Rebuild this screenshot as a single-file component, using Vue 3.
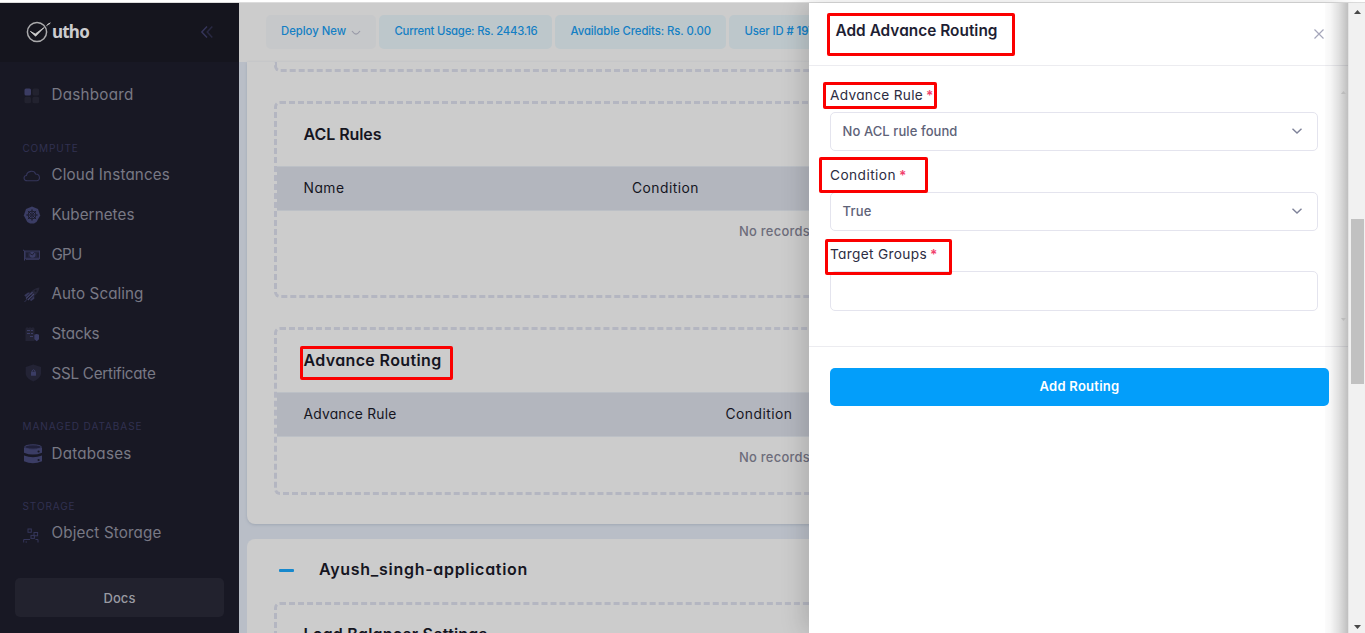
<script setup>
// Spreads letters so that a label occupies the given width in pixels.
const vFit = {
  mounted(el, { value }) {
    if (!value) return
    const natural = el.getBoundingClientRect().width
    const count = el.textContent.trim().length
    el.style.letterSpacing = `${(value - natural) / count}px`
  },
}

const sections = [
  { title: '', items: [{ label: 'Dashboard', icon: 'grid', w: 82 }] },
  {
    title: 'COMPUTE',
    w: 56,
    items: [
      { label: 'Cloud Instances', icon: 'cloud', w: 118.5 },
      { label: 'Kubernetes', icon: 'kube', w: 83 },
      { label: 'GPU', icon: 'gpu', w: 30 },
      { label: 'Auto Scaling', icon: 'rocket', w: 92 },
      { label: 'Stacks', icon: 'stack', w: 48 },
      { label: 'SSL Certificate', icon: 'shield', w: 104 },
    ],
  },
  { title: 'MANAGED DATABASE', w: 120, items: [{ label: 'Databases', icon: 'db', w: 80 }] },
  { title: 'STORAGE', w: 53, items: [{ label: 'Object Storage', icon: 'object', w: 110 }] },
]

const spokes = [0, 45, 90, 135, 180, 225, 270, 315]

const tables = [
  { title: 'ACL Rules', tw: 78, first: 'Name', fw: 41, cls: 'acl' },
  { title: 'Advance Routing', tw: 138, first: 'Advance Rule', fw: 93, cls: 'adv' },
]
</script>

<template>
  <div class="page">
    <div class="strip"></div>
    <div class="body">
      <aside class="sidebar">
        <div class="brand">
          <svg class="logo" width="28" height="24" viewBox="0 0 28 24">
            <circle cx="11" cy="12" r="9.6" fill="none" stroke="#aaaaac" stroke-width="1.5" />
            <path d="M4.4 11.4 L9.3 14 L18 7.6 L9.6 16.2 Z" fill="#d0d0d0" stroke="#d0d0d0" stroke-width="0.8" />
            <path d="M19.8 5.4 Q21.5 2 26.3 1.4 Q24.5 5 21.2 6.4" fill="#c8c8c8" stroke="#15151e" stroke-width="1.2" />
          </svg>
          <span class="brand-name"><span v-fit="37">utho</span></span>
          <svg class="collapse" width="14" height="14" viewBox="0 0 14 14" fill="none" stroke-width="1.5">
            <path d="M7 1.5 L1.8 7 L7 12.5" stroke="#353559" />
            <path d="M12.3 1.5 L7.2 7 L12.3 12.5" stroke="#282842" />
          </svg>
        </div>
        <nav>
          <template v-for="s in sections" :key="s.title">
            <div v-if="s.title" class="section"><span v-fit="s.w">{{ s.title }}</span></div>
            <div v-for="i in s.items" :key="i.label" class="item">
              <span class="icon" :class="i.icon">
                <svg v-if="i.icon === 'grid'" width="18" height="18" viewBox="0 0 18 18" fill="#22222f">
                  <rect x="1.5" y="1.5" width="6.5" height="7" rx="1.5" fill="#3b3c63" />
                  <rect x="9.5" y="1.5" width="6.6" height="7" rx="1.5" />
                  <rect x="1.5" y="9.8" width="6.5" height="6.5" rx="1.5" />
                  <rect x="9.5" y="9.8" width="6.6" height="6.5" rx="1.5" />
                </svg>
                <svg v-else-if="i.icon === 'cloud'" width="18" height="14" viewBox="0 0 18 14">
                  <path d="M4.3 11.8 C0 11.8 .2 6.7 3.5 6.5 C4.1 1.4 11.4 1 12.6 5 C17.6 5.1 17.5 11.8 13.7 11.8 Z" fill="none" stroke="#34355a" stroke-width="1.1" />
                </svg>
                <svg v-else-if="i.icon === 'kube'" width="18" height="18" viewBox="0 0 18 18">
                  <path d="M9 .5 L15 3.1 L17.2 9.5 L13.5 16 L11 17.4 H7 L4.3 16 L.8 9.5 L3 3.1 Z" fill="#3b3d65" />
                  <g fill="none" stroke="#181824" stroke-width=".8">
                    <circle cx="9" cy="9" r="4" />
                    <circle cx="9" cy="9" r="1" />
                    <path v-for="a in spokes" :key="a" d="M9 7.8 V3.2" :transform="`rotate(${a} 9 9)`" />
                  </g>
                </svg>
                <svg v-else-if="i.icon === 'gpu'" width="18" height="12" viewBox="0 0 18 12">
                  <path d="M0 1 L1.5 1.8 V11.5" fill="none" stroke="#3b3d65" />
                  <rect x="2" y="2" width="14.5" height="7.7" fill="#25263e" stroke="#37385d" />
                  <circle cx="9.5" cy="5.7" r="3" fill="#3b3d65" />
                  <path d="M9.5 6 L11.5 3.4 M9.5 6 L7 4.6 M4 4 V8 M15 4 V8" stroke="#181824" stroke-width=".8" />
                  <path d="M3 10.5 H16" stroke="#333456" />
                </svg>
                <svg v-else-if="i.icon === 'rocket'" width="18" height="17" viewBox="0 0 18 17">
                  <path d="M16.5 1.5 Q10.8 2.2 6.5 7.2 L10 11 Q16 7 16.5 1.5 Z" fill="#262638" />
                  <path d="M1.2 9.2 L5 6.5 L7.3 6.8 L3 11 Z M8.2 15 L11.3 12.7 L11.2 9.8 L6.8 14 Z" fill="#363759" />
                  <path d="M3 12.5 L9.6 6.2 M4.8 14 L11 8" stroke="#44456d" stroke-width="1.1" />
                  <path d="M1.5 16 L4.5 12.8" stroke="#303150" />
                  <circle cx="12.6" cy="4.8" r="1" fill="#181824" />
                </svg>
                <svg v-else-if="i.icon === 'stack'" width="16" height="16" viewBox="0 0 16 16">
                  <path d="M1.5 2.5 L3 1 L4.5 2 L6 1 L7.5 2 L9 1 L10.5 2.5 V15 H1.5 Z" fill="#232334" />
                  <path d="M3 4.5 H6 M7 4.5 H9 M3 7.5 H6 M7 7.5 H9 M6 10.5 H9" stroke="#3b3d65" />
                  <path d="M10.3 8.8 Q12.7 7 15 8.8 V13.3 L12.7 15.3 L10.3 13.3 Z" fill="#3b3d65" />
                </svg>
                <svg v-else-if="i.icon === 'shield'" width="17" height="18" viewBox="0 0 17 18">
                  <path d="M8.3 .5 L16 3 V10 Q15 15 8.3 17.5 Q1.5 15 .7 10 V3 Z" fill="#232335" />
                  <rect x="6" y="7.8" width="5" height="4" rx=".6" fill="#3b3d65" />
                  <path d="M7 8 V6.8 Q8.5 4.6 10 6.8 V8" fill="none" stroke="#3b3d65" />
                </svg>
                <svg v-else-if="i.icon === 'db'" width="18" height="20" viewBox="0 0 18 20">
                  <path d="M0 3.5 V8.7 Q8.8 12.5 18 8.7 V3.5 Q9 7.2 0 3.5 Z M0 11.6 V17.3 Q8.8 21.4 18 17.3 V11.6 Q9 14.7 0 11.6 Z" fill="#3b3d65" />
                  <ellipse cx="9" cy="3" rx="8.4" ry="2.2" fill="#20203a" stroke="#3b3d65" />
                  <circle cx="14.6" cy="7.5" r="1.1" fill="#181824" />
                  <circle cx="14.6" cy="16" r="1.1" fill="#181824" />
                </svg>
                <svg v-else width="16" height="16" viewBox="0 0 16 16" fill="none" stroke="#35365a">
                  <rect x="5" y="2" width="3.3" height="3.3" />
                  <rect x="11" y="5.5" width="3.6" height="3.3" />
                  <rect x="8" y="8.4" width="3.4" height="3" />
                  <path d="M.7 15.5 V12.5 H7 M12.5 12.5 H15 V15.5 M2.5 15 H4" />
                </svg>
              </span>
              <span v-fit="i.w">{{ i.label }}</span>
            </div>
          </template>
        </nav>
        <div class="docs"><span v-fit="32">Docs</span></div>
      </aside>

      <main class="main">
        <header class="topbar">
          <div class="pill deploy">
            <span v-fit="65">Deploy New</span>
            <svg width="10" height="6" viewBox="0 0 10 6" fill="none" stroke="#999ba8" stroke-width="1.2"><path d="M1 1 Q3 3.8 5 4.1 Q7 3.8 9 1" /></svg>
          </div>
          <div class="pill usage"><span v-fit="143">Current Usage: Rs. 2443.16</span></div>
          <div class="pill credits"><span v-fit="140.5">Available Credits: Rs. 0.00</span></div>
          <div class="pill user"><span v-fit="84">User ID <b># 19782</b></span></div>
        </header>
        <div class="content">
          <section class="card top">
            <div class="dashed tail"></div>
            <div v-for="t in tables" :key="t.title" class="dashed" :class="t.cls">
              <h3><span v-fit="t.tw">{{ t.title }}</span></h3>
              <div class="thead">
                <span class="first"><span v-fit="t.fw">{{ t.first }}</span></span>
                <span v-fit="67">Condition</span>
              </div>
              <div class="empty"><span v-fit="112">No records found</span></div>
            </div>
          </section>
          <section class="card">
            <div class="app-head">
              <i class="minus"></i>
              <span v-fit="209">Ayush_singh-application</span>
            </div>
            <div class="dashed lb"><h3><span v-fit="184">Load Balancer Settings</span></h3></div>
          </section>
        </div>
      </main>

      <div class="drawer">
        <header class="drawer-head">
          <h2><span v-fit="162">Add Advance Routing</span></h2>
          <svg width="10" height="10" viewBox="0 0 10 10" stroke="#a5a6ba" stroke-width="1.2"><path d="M.5 .5 L9.5 9.5 M9.5 .5 L.5 9.5" /></svg>
        </header>
        <div class="form">
          <label><span v-fit="93">Advance Rule</span><em>*</em></label>
          <div class="select"><span v-fit="115">No ACL rule found</span>
            <svg width="10" height="6" viewBox="0 0 10 6" fill="none" stroke="#7e8299" stroke-width="1.4"><path d="M.5 .7 L5 5 L9.5 .7" /></svg>
          </div>
          <label><span v-fit="66">Condition</span><em>*</em></label>
          <div class="select"><span v-fit="29">True</span>
            <svg width="10" height="6" viewBox="0 0 10 6" fill="none" stroke="#7e8299" stroke-width="1.4"><path d="M.5 .7 L5 5 L9.5 .7" /></svg>
          </div>
          <label><span v-fit="97">Target Groups</span><em>*</em></label>
          <div class="select last"></div>
        </div>
        <footer><button><span v-fit="80">Add Routing</span></button></footer>
        <div class="edge"><i class="tri up"></i><i class="tri down"></i></div>
      </div>

      <div class="scrollbar">
        <i class="tri up"></i>
        <div class="thumb"></div>
        <i class="tri down"></i>
      </div>
    </div>

    <div class="mark m1"></div>
    <div class="mark m2"></div>
    <div class="mark m3"></div>
    <div class="mark m4"></div>
    <div class="mark m5"></div>
  </div>
</template>

<style>
html, body { margin: 0; overflow: hidden; }
</style>

<style scoped>
* { box-sizing: border-box; }
.page {
  position: relative; width: 1365px; height: 633px; overflow: hidden; background: #fff;
  font-family: Inter, "Open Sans", sans-serif; font-feature-settings: "cv11"; font-size: 13px; white-space: nowrap;
}
.strip { height: 3px; border-bottom: 1px solid #dcdcdc; }
.body { display: flex; height: 630px; }
svg { display: block; flex: none; }

.sidebar { width: 239px; flex: none; background: #181824; display: flex; flex-direction: column; }
.brand { height: 59px; flex: none; background: #15151e; display: flex; align-items: center; padding: 0 0 1px 26px; }
.logo { width: 28px; }
.brand-name { margin-left: -2px; width: 148px; font: 700 17px/20px "Noto Sans", sans-serif; color: #ccccce; }
nav { padding-top: 13px; flex: 1; }
.section { height: 40.3px; padding: 26px 0 0 22.5px; font-size: 10px; line-height: 15px; color: #313151; }
.item { height: 39.67px; display: flex; align-items: center; padding-left: 23px; font-size: 15.2px; color: #787985; }
.icon { width: 28.5px; padding-top: 2px; }
.shield { padding-left: 2px; padding-top: 0; }
.stack { padding-left: 1px; }
.db { padding-left: 1px; }
.object { padding-top: 4px; }
.docs {
  height: 39px; margin: 0 15px 16px; border-radius: 5px; background: #22222e; color: #999aa2;
  display: flex; align-items: center; justify-content: center; font-weight: 500; font-size: 13px;
}

.main { width: 570px; flex: none; overflow: hidden; background: #b9bec7; }
.topbar { height: 59px; background: #ccc; padding: 12px 0 0 27px; display: flex; gap: 3px; }
.pill { height: 34px; flex: none; border-radius: 5px; background: #bdc7cb; color: #147fc4; font-size: 11.3px; font-weight: 500; display: flex; align-items: center; padding: 0 15px 2px 15.5px; }
.deploy { width: 110px; padding-left: 15px; background: #c6c8ca; gap: 5px; }
.deploy svg { margin-top: 4px; }
.usage { width: 173px; }
.credits { width: 171px; }
.user { width: 140px; }
.user b { font-weight: 600; }
.content { padding-left: 8px; }
.card { width: 1090px; background: #ccc; border-radius: 8px; padding-left: 27px; height: 110px; }
.card.top { height: 462px; margin-bottom: 15px; border-radius: 0 0 8px 8px; box-shadow: 0 1px 3px #9fa7b3; }
.dashed { width: 1036px; border: 3px dashed #b4b6c1; border-radius: 6px; }
.tail { height: 10px; border-top: 0; border-radius: 0 0 6px 6px; margin-bottom: 29px; }
.acl { height: 197px; margin-bottom: 29px; }
.adv { height: 168px; }
h3 { margin: 0; height: 62px; padding: 0 0 2px 26.5px; display: flex; align-items: center; font-size: 16px; font-weight: 600; color: #15151f; }
.thead { height: 45px; background: #b3b6be; border-top: 1px solid #bcc0c6; border-bottom: 1px solid #bcc0c6; display: flex; align-items: center; padding: 0 0 2px 26.5px; color: #15151f; font-size: 13.8px; }
.acl .first { width: 328.5px; }
.adv .first { width: 422px; }
.empty { padding: 12px 0 0 462px; line-height: 18px; color: #6d6d7b; font-weight: 500; font-size: 12.9px; }
.app-head { height: 62px; display: flex; align-items: center; gap: 25px; padding: 0 0 3px 5px; font-size: 16px; font-weight: 600; color: #15151f; }
.minus { width: 15px; height: 3px; border-radius: 1px; background: #1688cd; margin-top: 3px; }
.lb { height: 100px; margin-top: 1px; }
.lb h3 { padding-bottom: 5px; }

.drawer { position: relative; width: 539px; flex: none; background: #fff; box-shadow: -6px 0 22px rgba(0, 0, 0, .15); }
.drawer-head { height: 63px; border-bottom: 1px solid #ececf0; display: flex; justify-content: space-between; padding: 16px 24px 0 26.5px; }
.drawer-head svg { margin-top: 10px; }
h2 { margin: 0; font-size: 15.4px; line-height: 23px; font-weight: 600; color: #1e1e33; }
.form { height: 281px; padding: 19px 30px 0 21px; border-bottom: 1px solid #ececf0; }
label { display: flex; height: 20px; gap: 3px; margin-bottom: 7px; line-height: 21px; font-size: 13.7px; color: #2c2c42; align-items: flex-start; }
label em { font-style: normal; color: #f1416c; font-weight: 600; }
.select { height: 39px; margin: 0 0 14px; border: 1px solid #e4e4ee; border-radius: 5px; display: flex; align-items: center; justify-content: space-between; padding: 0 15px 1px 11.5px; font-size: 13px; font-weight: 500; color: #5e6278; }
.form .select:nth-of-type(2) { margin-bottom: 13px; }
.select.last { height: 40px; margin-bottom: 0; }
footer { position: relative; z-index: 1; padding: 21px 19px 0 21px; }
button { display: block; width: 499px; height: 38px; border: 0; border-radius: 5px; background: #039efa; color: #fff; font: 600 13px Inter, sans-serif; font-feature-settings: inherit; padding: 0 0 2px; }
.edge { position: absolute; z-index: 0; top: 0; right: 0; width: 23px; height: 630px; background: linear-gradient(90deg, rgba(0, 0, 0, .015), rgba(0, 0, 0, .03) 22%, rgba(0, 0, 0, .12) 60%, rgba(0, 0, 0, .25)); }
.tri { display: block; width: 7px; height: 4px; background: #484848; }
.tri.up { clip-path: polygon(50% 0, 100% 100%, 0 100%); }
.tri.down { clip-path: polygon(0 0, 100% 0, 50% 100%); }
.edge .tri { width: 5px; height: 3px; background: #bbb; margin-left: 16px; }
.edge .up { margin-top: 88px; }
.edge .down { margin-top: 224px; }

.scrollbar { position: relative; width: 17px; flex: none; background: #f1f1f1; border-left: 1px solid #e4e4e4; display: flex; flex-direction: column; padding: 7px 1px 0 2px; }
.scrollbar .tri { margin-left: 3px; }
.thumb { height: 165px; margin: 205px 0 241px; background: #c1c1c1; }

/* Red annotation frames drawn over the page */
.mark { position: absolute; border: 3px solid #fb0000; border-radius: 2px; z-index: 5; }
.m1 { left: 827px; top: 13px; width: 188px; height: 43px; }
.m2 { left: 823px; top: 82px; width: 114px; height: 27px; }
.m3 { left: 819px; top: 157px; width: 109px; height: 36px; }
.m4 { left: 825px; top: 239px; width: 127px; height: 36px; }
.m5 { left: 300px; top: 346px; width: 153px; height: 34px; }
</style>
